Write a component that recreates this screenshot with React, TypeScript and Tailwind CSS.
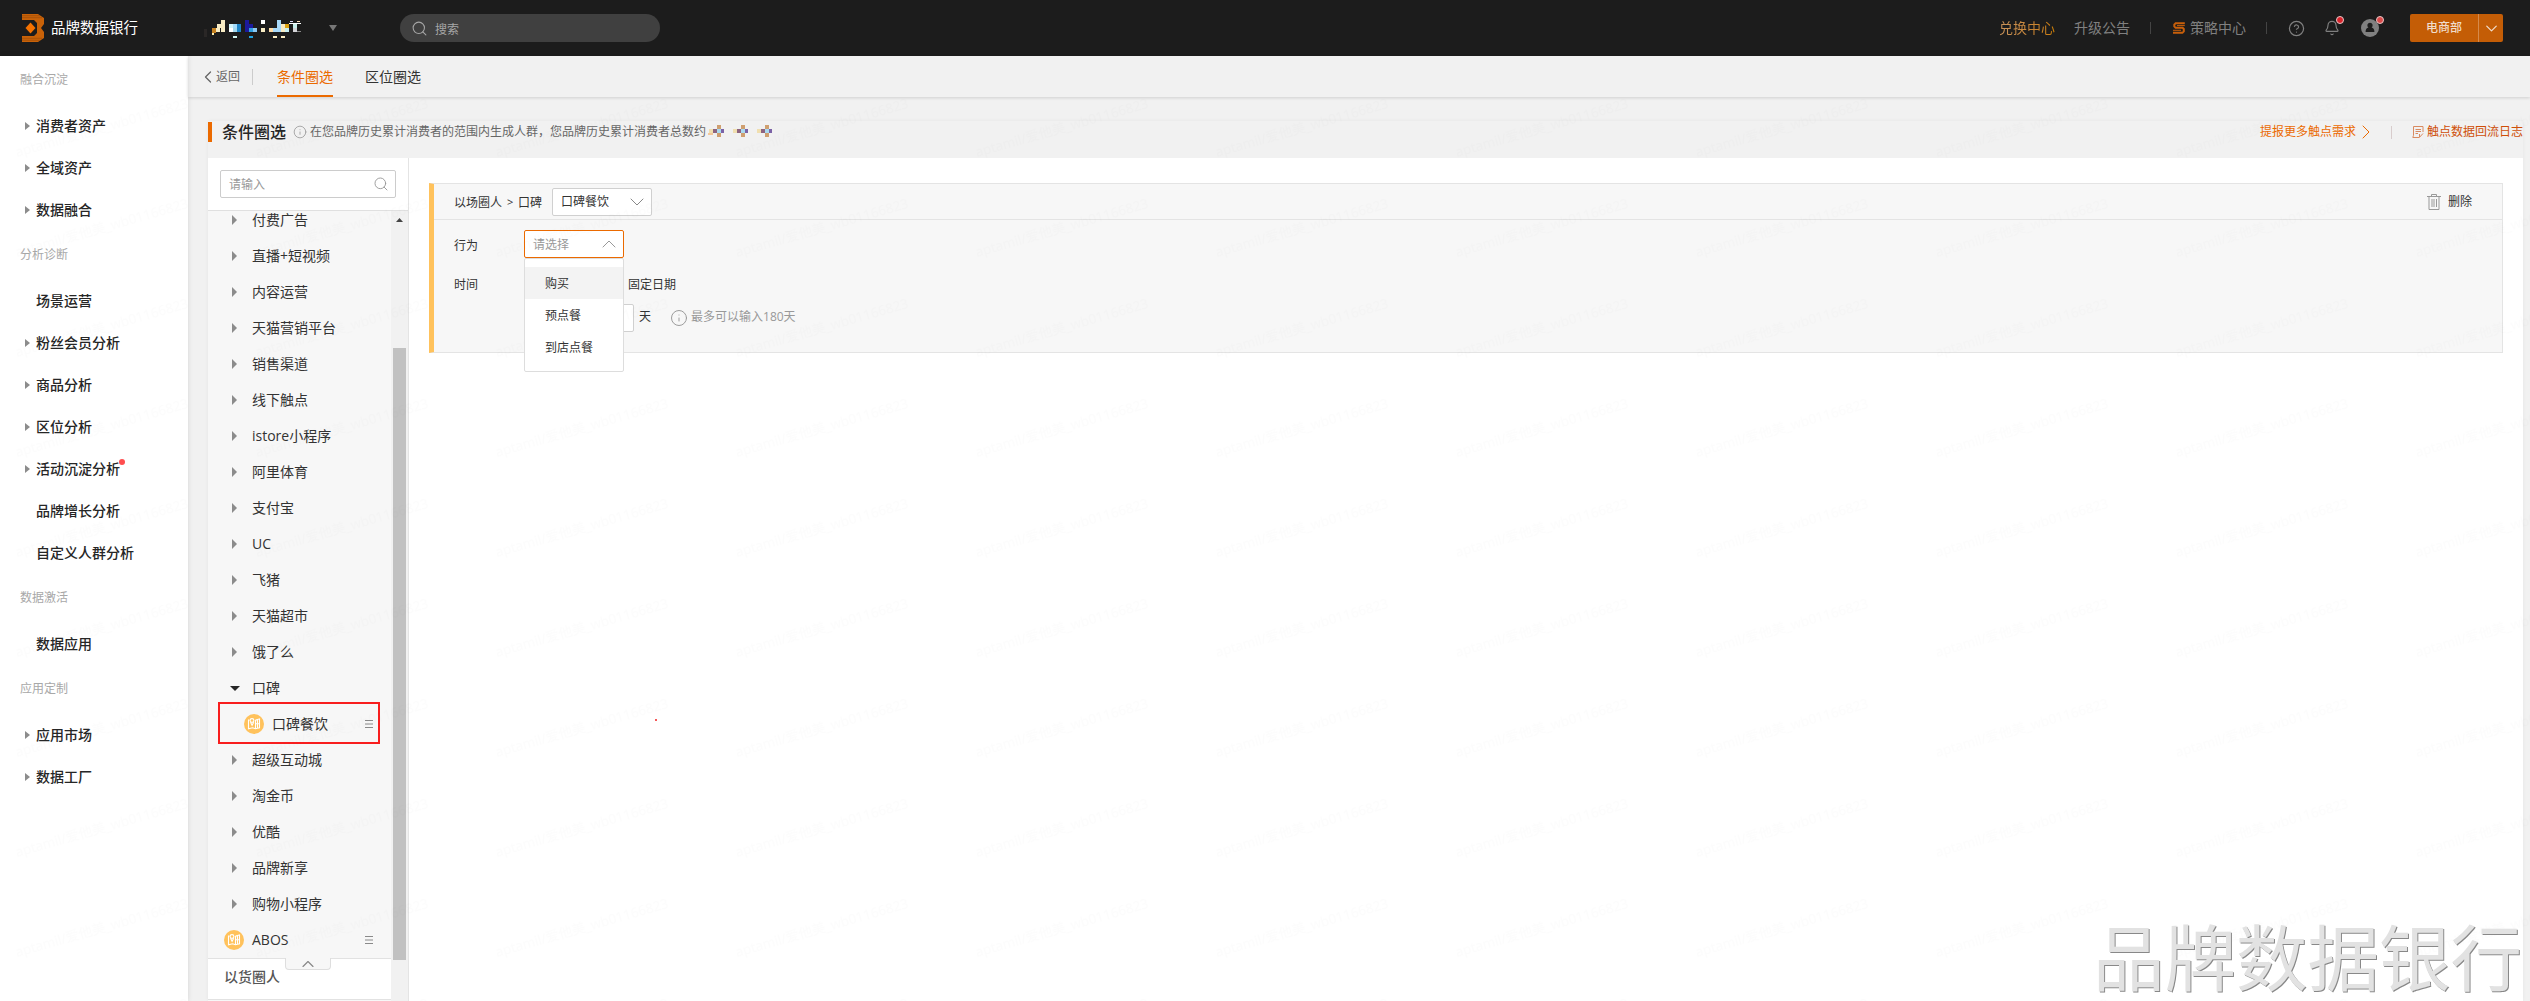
import { Bell, ChevronDown, ChevronLeft, ChevronRight, ChevronUp, CircleHelp, Info, Search } from "lucide-react";

type NavItem = { label: string; arrow?: boolean; dot?: boolean };

const NAV: { title: string; items: NavItem[] }[] = [
    {
        title: "融合沉淀",
        items: [
            { label: "消费者资产", arrow: true },
            { label: "全域资产", arrow: true },
            { label: "数据融合", arrow: true },
        ],
    },
    {
        title: "分析诊断",
        items: [
            { label: "场景运营" },
            { label: "粉丝会员分析", arrow: true },
            { label: "商品分析", arrow: true },
            { label: "区位分析", arrow: true },
            { label: "活动沉淀分析", arrow: true, dot: true },
            { label: "品牌增长分析" },
            { label: "自定义人群分析" },
        ],
    },
    { title: "数据激活", items: [{ label: "数据应用" }] },
    {
        title: "应用定制",
        items: [
            { label: "应用市场", arrow: true },
            { label: "数据工厂", arrow: true },
        ],
    },
];

const TREE_TOP = [
    "付费广告", "直播+短视频", "内容运营", "天猫营销平台", "销售渠道", "线下触点", "istore小程序",
    "阿里体育", "支付宝", "UC", "飞猪", "天猫超市", "饿了么",
];
const TREE_BOTTOM = ["超级互动城", "淘金币", "优酷", "品牌新享", "购物小程序"];

// masked account name: x, y, width, height, colour
const NAME_BLOCKS: [number, number, number, number, string][] = [
    [0, 9, 3, 8, "#2a2726"],
    [17, 0, 4, 12, "#f8ecc4"], [13, 4, 4, 4, "#f8ecc4"], [8, 8, 4, 5, "#c78220"], [12, 8, 4, 4, "#f8ecc4"], [8, 13, 2, 2, "#fff0b0"],
    [25, 4, 4, 4, "#d2f4fa"], [29, 4, 4, 4, "#a6dcfa"], [33, 4, 4, 8, "#1f84c6"], [25, 8, 4, 4, "#ffffff"], [29, 8, 4, 4, "#a3d8ee"], [29, 16, 4, 2, "#d2f4ef"],
    [41, 0, 4, 12, "#1c1a9c"], [45, 4, 4, 4, "#1c1a9c"], [45, 8, 4, 4, "#2f9fe0"], [49, 8, 4, 4, "#8cc8f4"], [45, 16, 4, 2, "#1fa4e4"],
    [57, 0, 4, 4, "#ffffff"], [57, 8, 4, 4, "#f8ecc4"], [65, 8, 4, 4, "#ffdca8"],
    [73, 0, 4, 12, "#a6d8fa"], [69, 8, 4, 4, "#a6d8fa"], [77, 4, 4, 8, "#f8ecc4"], [81, 4, 4, 4, "#dca414"], [81, 8, 4, 4, "#c8f0f4"],
    [69, 16, 4, 2, "#f8ecc4"], [77, 16, 4, 2, "#f8ecc4"],
    [86, 1, 3, 1, "#e0e0ff"], [93, 1, 3, 1, "#ffe0c0"], [85, 3, 12, 1, "#ffffff"], [89, 4, 4, 4, "#c8f0ec"], [89, 8, 4, 4, "#d4d4d8"], [93, 11, 4, 1, "#888888"],
];

function Caret({ className }: { className: string }) {
    return (
        <svg viewBox="0 0 5 10" preserveAspectRatio="none" className={className} fill="currentColor">
            <path d="M0 0 5 5 0 10z" />
        </svg>
    );
}

function MapBadge() {
    return (
        <svg viewBox="0 0 20 20" className="size-5 shrink-0">
            <circle cx="10" cy="10" r="10" fill="#ffc25c" />
            <g fill="none" stroke="#fff" strokeWidth="1.1">
                <path d="M5.500 6H4.500v8.800l4-1 3 1 4-1V5l-4 1M11.500 6v8.800M11.500 9.800h4M13.500 5.500v8.800" />
                <circle cx="8" cy="6.500" r="1.900" />
                <path d="m6.500 8.300 1.600 3 1.600-3" />
            </g>
        </svg>
    );
}

function MenuLines() {
    return (
        <svg viewBox="0 0 8 8" className="h-2 w-2 shrink-0" stroke="#8a8a8a" strokeWidth="1">
            <path d="M0 .5h8M0 4h8M0 7.500h8" />
        </svg>
    );
}

function TreeRow({ label }: { label: string }) {
    return (
        <li className="flex h-9 items-center pl-6">
            <Caret className="h-[10px] w-[5px] text-[#8c8c8c]" />
            <span className="ml-[15px]">{label}</span>
        </li>
    );
}

function Header() {
    return (
        <header className="flex h-14 shrink-0 items-center bg-[#1c1c1c] pr-[27px] pl-[22px]">
            <svg viewBox="0 0 22 28" className="h-7 w-[22px]">
                <path d="M0 0h16l6 4v6l-3 4 3 4v6l-6 4H0v-6h12l3-3v-10l-3-3H0z" fill="#c96208" />
                <path d="M0 1.700h18M0 3.700h20M0 24.300h20M0 26.300h18" stroke="#9c4d0a" strokeWidth=".7" />
                <path d="m8.500 8.500 5 5.500-5 5.500-5-5.500z" fill="#f57200" />
            </svg>
            <span className="ml-[7px] w-[153px] text-[14.500px] text-white">品牌数据银行</span>
            <svg viewBox="0 0 97 18" className="mt-[2px] h-[18px] w-[97px]" shapeRendering="crispEdges">
                {NAME_BLOCKS.map(([x, y, w, h, c]) => (
                    <rect key={`${x}-${y}`} x={x} y={y} width={w} height={h} fill={c} />
                ))}
            </svg>
            <svg viewBox="0 0 8 6" className="ml-7 h-[6px] w-2" fill="#777">
                <path d="M0 0h8L4 6z" />
            </svg>
            <div className="ml-[63px] flex h-7 w-[260px] items-center rounded-full bg-[#404040] pl-[11px] text-xs text-[#a6a6a6]">
                <Search size={17} strokeWidth={1.5} />
                <span className="mt-[3px] ml-[7px]">搜索</span>
            </div>

            <div className="ml-auto flex items-center text-sm text-[#808080]">
                <span className="bg-gradient-to-r from-[#c9935a] to-[#c97c00] bg-clip-text text-transparent">兑换中心</span>
                <span className="ml-[19px]">升级公告</span>
                <i className="ml-5 h-3 w-px bg-[#444]" />
                <svg viewBox="0 0 12 12" className="ml-[22px] size-3" fill="none" stroke="#c85f0a">
                    <path d="M11.800 1.300H2.600L1.300 2.600v1.800l1.300 1.300h7l1.200 1.300v2.400l-1.400 1.300H0" strokeWidth="2" />
                    <path d="M4 3.600h7.800M0 8.300h8" strokeWidth="1" />
                </svg>
                <span className="ml-[5px]">策略中心</span>
                <i className="ml-5 h-3 w-px bg-[#444]" />
                <CircleHelp size={17} strokeWidth={1.7} className="ml-[21px]" />
                <div className="relative ml-[19px]">
                    <Bell size={16} strokeWidth={1.7} />
                    <i className="absolute -top-1 left-3 size-2 rounded-full border border-[#e8c8c8] bg-[#d9242c]" />
                </div>
                <div className="relative ml-[21px]">
                    <svg viewBox="0 0 18 18" className="size-[18px]">
                        <circle cx="9" cy="9" r="9" fill="#808080" />
                        <path d="M9 3.800a2.600 2.600 0 0 1 1.600 4.700c2 .4 2.800 1.800 2.800 4.500H4.600c0-2.700.8-4.100 2.800-4.500A2.600 2.600 0 0 1 9 3.800z" fill="#1c1c1c" />
                    </svg>
                    <i className="absolute -top-[3px] left-[15px] size-2 rounded-full border border-[#e8c8c8] bg-[#d94a4a]" />
                </div>
                <div className="ml-[31px] flex h-7 w-[93px] items-center rounded-[2px] bg-[#c45d06] text-xs font-medium text-[#f0dccb]">
                    <span className="w-[68px] pl-4">电商部</span>
                    <i className="h-full w-px bg-[#d58a4c]" />
                    <ChevronDown size={19} strokeWidth={1.6} className="ml-[3px]" />
                </div>
            </div>
        </header>
    );
}

function Sidebar() {
    return (
        <aside className="w-[188px] shrink-0 bg-white shadow-[0_0_5px_rgba(0,0,0,0.12)]">
            {NAV.map((section) => (
                <section key={section.title}>
                    <h3 className="h-[49px] pl-5 text-xs leading-[48px] text-[#a8a8a8]">{section.title}</h3>
                    {section.items.map((item) => (
                        <a key={item.label} className="flex h-[42px] items-center pl-[25px] text-sm font-medium text-[#262626]">
                            <span className="w-[11px]">{item.arrow && <Caret className="h-2 w-[5px] text-[#8c8c8c]" />}</span>
                            <span className="relative">
                                {item.label}
                                {item.dot && <i className="absolute top-0 -right-[5px] size-[6px] rounded-full bg-[#ff4d4f]" />}
                            </span>
                        </a>
                    ))}
                </section>
            ))}
        </aside>
    );
}

function Tree() {
    return (
        <div className="flex w-[201px] shrink-0 flex-col border-r border-[#e4e4e4]">
            <div className="h-[53px] shrink-0 border-b border-[#e0e0e0] px-3 pt-3">
                <div className="flex h-7 w-[176px] items-center justify-between rounded-[2px] border border-[#ccc] bg-white pr-[6px] pl-2 text-xs text-[#999]">
                    <span className="mt-px">请输入</span>
                    <Search size={16} strokeWidth={1.4} />
                </div>
            </div>
            <div className="flex flex-1 overflow-hidden">
                <div className="w-[183px] bg-[#f7f7f7] text-sm text-[#333]">
                    <ul className="-mt-[9px]">
                        {TREE_TOP.map((label) => <TreeRow key={label} label={label} />)}
                        <li className="flex h-9 items-center pl-[22px]">
                            <svg viewBox="0 0 10 5" className="h-[5px] w-[10px]" fill="#262626"><path d="M0 0h10L5 5z" /></svg>
                            <span className="ml-3">口碑</span>
                        </li>
                        <li className="relative flex h-9 items-center pr-[18px] pl-9">
                            <MapBadge />
                            <span className="mr-auto ml-2">口碑餐饮</span>
                            <MenuLines />
                            <i className="absolute -top-1 left-[10px] h-[42px] w-[162px] border-2 border-[#f81e1e]" />
                        </li>
                        {TREE_BOTTOM.map((label) => <TreeRow key={label} label={label} />)}
                        <li className="flex h-9 items-center pr-[18px] pl-4">
                            <MapBadge />
                            <span className="mr-auto ml-2">ABOS</span>
                            <MenuLines />
                        </li>
                    </ul>
                    <div className="relative flex h-[42px] items-center border-y border-[#e2e2e2] bg-white pl-4 text-[#555]">
                        <span className="-mt-[5px] font-medium">以货圈人</span>
                        <div className="absolute -top-px left-[77px] flex h-3 w-[46px] items-center justify-center rounded-b-[4px] border border-t-0 border-[#dedede] bg-[#f7f7f7]">
                            <ChevronUp size={20} strokeWidth={1.4} color="#888" className="shrink-0" />
                        </div>
                    </div>
                </div>
                <div className="w-[17px] bg-[#f1f1f1] pl-[2px]">
                    <svg viewBox="0 0 7 4" className="mt-[7px] ml-[3px] h-1 w-[7px]" fill="#444"><path d="M0 4h7L3.500 0z" /></svg>
                    <div className="mt-[126px] h-[612px] w-[13px] bg-[#c1c1c1]" />
                </div>
            </div>
        </div>
    );
}

function ConditionCard() {
    return (
        <div className="h-[170px] border border-l-[5px] border-[#e4e4e4] border-l-[#ffc25c] bg-[#f7f7f7] text-xs text-[#333]">
            <div className="flex h-9 items-center border-b border-[#e4e4e4] pl-5">
                <span className="mt-[2px]">以场圈人</span>
                <span className="mx-[5px] mt-[2px] w-[6px] text-[11px]">&gt;</span>
                <span className="mt-[2px]">口碑</span>
                <div className="ml-[10px] flex h-7 w-[100px] items-center justify-between rounded-[2px] border border-[#d0d0d0] bg-white pr-[2px] pl-2">
                    <span className="mt-px">口碑餐饮</span>
                    <ChevronDown size={24} strokeWidth={1} color="#888" />
                </div>
                <svg viewBox="0 0 14 16" className="mr-[7px] ml-auto h-4 w-[14px]" fill="none" stroke="#999">
                    <path d="M0 2.500h14M4.500 2.500V.5h5v2M2 2.500v13h10v-13M5 5v8M7 5v8M9.500 5v8" />
                </svg>
                <span className="mt-px mr-[30px]">删除</span>
            </div>
            <div className="mt-[10px] flex h-7 items-center pl-5">
                <span className="mt-[4px] w-[70px]">行为</span>
                <div className="relative flex h-7 w-[100px] items-center justify-between rounded-[2px] border border-[#eb6a00] bg-white pr-[2px] pl-2 text-[#999]">
                    <span className="mt-px">请选择</span>
                    <ChevronUp size={24} strokeWidth={1} />
                    <ul className="absolute top-[27px] -left-px z-10 h-[114px] w-[100px] rounded-[2px] border border-[#ddd] bg-white pt-2 text-[#333]">
                        <li className="h-8 bg-[#f3f3f3] pl-5 leading-[33px]">购买</li>
                        <li className="h-8 pl-5 leading-[33px]">预点餐</li>
                        <li className="h-8 pl-5 leading-[33px]">到店点餐</li>
                    </ul>
                </div>
            </div>
            <div className="mt-[13px] flex h-7 items-center pl-5">
                <span className="w-[174px]">时间</span>
                <span>固定日期</span>
            </div>
            <div className="mt-[5px] flex h-7 items-center pl-[90px]">
                <div className="h-7 w-[110px] rounded-[2px] border border-[#d0d0d0] bg-white" />
                <span className="-mt-[2px] ml-[5px]">天</span>
                <Info size={18} strokeWidth={1.3} color="#999" className="ml-[19px]" />
                <span className="-mt-[2px] ml-[3px] text-[#999]">最多可以输入180天</span>
            </div>
        </div>
    );
}

function MaskedTotal() {
    return (
        <svg viewBox="0 0 66 16" className="h-4 w-[66px]" shapeRendering="crispEdges">
            <rect x="2" y="9" width="5" height="2" fill="#f3c79a" />
            {[11, 35, 59].map((x) => (
                <g key={x}>
                    <rect x={x - 8} y="5" width="4" height="4" fill="#f0dfb0" />
                    <rect x={x - 4} y="5" width="4" height="4" fill="#8d6480" />
                    <rect x={x} y="1" width="4" height="4" fill="#cf9f70" />
                    <rect x={x} y="5" width="4" height="4" fill="#a9daf0" />
                    <rect x={x} y="9" width="4" height="4" fill="#cf9f70" />
                    <rect x={x + 4} y="5" width="3" height="4" fill="#7b62a6" />
                </g>
            ))}
        </svg>
    );
}

// faint account stamp tiled over the page body
function Stamp() {
    return (
        <svg className="pointer-events-none absolute inset-0 h-full w-full">
            <defs>
                <pattern id="stamp" width="240" height="100" patternUnits="userSpaceOnUse">
                    {[1, 101].map((y) => (
                        <text key={y} x="17" y={y} fontSize="13.500" fill="#000" fillOpacity=".01" transform={`rotate(-16 17 ${y})`}>
                            aptamil/爱他美_wb01166823
                        </text>
                    ))}
                </pattern>
            </defs>
            <rect y="41" width="100%" height="100%" fill="url(#stamp)" />
        </svg>
    );
}

export default function App() {
    return (
        <div className="flex h-[1001px] w-[2530px] flex-col overflow-hidden bg-[#f1f1f1] font-['Open_Sans','Noto_Sans_CJK_SC',sans-serif] whitespace-nowrap">
            <Header />
            <div className="relative flex min-h-0 flex-1">
                <Sidebar />
                <div className="flex min-w-0 flex-1 flex-col">
                    <nav className="flex h-[41px] shrink-0 items-center pl-[10px] text-sm shadow-[0_1px_3px_rgba(0,0,0,0.14)]">
                        <ChevronLeft size={20} strokeWidth={1.5} color="#666" />
                        <span className="-ml-[2px] text-xs text-[#666]">返回</span>
                        <i className="ml-3 h-4 w-px bg-[#ccc]" />
                        <span className="ml-6 h-full border-b-2 border-[#eb6a00] leading-[41px] text-[#eb6a00]">条件圈选</span>
                        <span className="ml-8 h-full leading-[41px] text-[#333]">区位圈选</span>
                    </nav>

                    <main className="mt-6 mr-[7px] ml-5 flex min-h-0 flex-1 flex-col shadow-[0_0_4px_rgba(0,0,0,0.05)]">
                        <div className="flex h-[37px] shrink-0 items-start text-xs">
                            <i className="mt-px h-5 w-1 bg-[#eb6a00]" />
                            <div className="flex h-[22px] flex-1 items-center text-[#666]">
                                <h1 className="ml-[10px] text-base font-medium text-[#262626]">条件圈选</h1>
                                <Info size={14} strokeWidth={1.4} color="#999" className="ml-[7px]" />
                                <span className="ml-[3px]">在您品牌历史累计消费者的范围内生成人群，您品牌历史累计消费者总数约</span>
                                <MaskedTotal />
                                <span className="ml-auto text-[#eb6a00]">提报更多触点需求</span>
                                <ChevronRight size={24} strokeWidth={1} color="#eb6a00" className="-ml-[2px]" />
                                <i className="ml-[13px] h-[13px] w-px bg-[#d8cccc]" />
                                <svg viewBox="0 0 12 12" className="ml-5 size-3" fill="none" stroke="#d98a60">
                                    <path d="M11 6V.5H1.500v8.800L.8 11.500H7M3.500 3.500H9M3.500 5.500H9M3.500 7.500H6M11 7.500 7.500 11.300M7.500 8v3.500" />
                                </svg>
                                <span className="ml-[3px] text-[#cf4f08]">触点数据回流日志</span>
                            </div>
                        </div>
                        <div className="flex min-h-0 flex-1 bg-white">
                            <Tree />
                            <div className="relative flex-1 pt-[25px] pr-5 pl-5">
                                <ConditionCard />
                                <i className="absolute top-[561px] left-[246px] size-[2px] rounded-full bg-[#f02020]" />
                            </div>
                        </div>
                    </main>
                </div>
                <Stamp />
                <div className="absolute right-2 bottom-px font-['Liberation_Sans','Noto_Sans_CJK_SC',sans-serif] text-[71.500px] leading-[80px] text-[#e2e2e2] [text-shadow:1px_1px_0_#888]">
                    品牌数据银行
                </div>
            </div>
        </div>
    );
}
